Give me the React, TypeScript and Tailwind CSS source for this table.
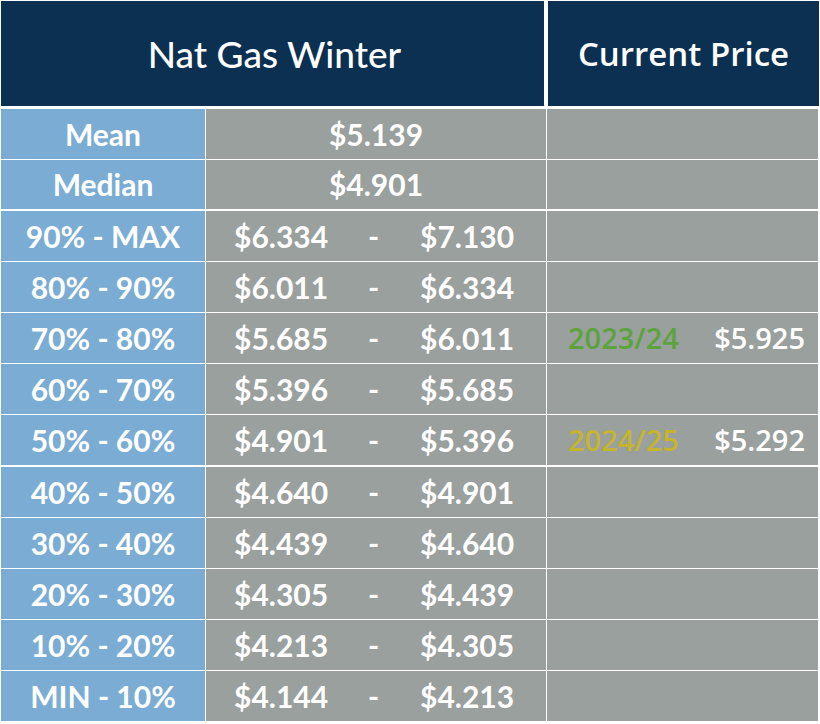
const rows = [
  { label: "90% - MAX", low: "$6.334", high: "$7.130" },
  { label: "80% - 90%", low: "$6.011", high: "$6.334" },
  { label: "70% - 80%", low: "$5.685", high: "$6.011", year: "2023/24", price: "$5.925", color: "text-[#5ba33a]" },
  { label: "60% - 70%", low: "$5.396", high: "$5.685" },
  { label: "50% - 60%", low: "$4.901", high: "$5.396", year: "2024/25", price: "$5.292", color: "text-[#c6b52c]" },
  { label: "40% - 50%", low: "$4.640", high: "$4.901" },
  { label: "30% - 40%", low: "$4.439", high: "$4.640" },
  { label: "20% - 30%", low: "$4.305", high: "$4.439" },
  { label: "10% - 20%", low: "$4.213", high: "$4.305" },
  { label: "MIN - 10%", low: "$4.144", high: "$4.213" },
];

const muli = "font-['Lato',sans-serif] font-bold";
const segoe = "font-['Open_Sans',sans-serif]";

export default function App() {
  return (
    <div className="flex h-[724px] w-[820px] flex-col overflow-hidden bg-white pl-px pt-px text-white">
      <div className="flex h-[105px] shrink-0 gap-[4px]">
        <div className="flex w-[543px] items-center justify-center bg-[#0b3052] pl-[4px] font-['Lato',sans-serif] text-[37px] font-medium">Nat Gas Winter</div>
        <div className={`${segoe} flex w-[271px] items-center justify-center bg-[#0b3052] text-[33px] font-semibold`}>Current Price</div>
      </div>

      <div className="mt-[3px] flex flex-col">
        {[{ label: "Mean", value: "$5.139" }, { label: "Median", value: "$4.901" }].map((row, i) => (
          <div key={row.label} className={`flex gap-px ${i === 0 ? "mb-px h-[50px]" : "mb-[2px] h-[49px]"}`}>
            <div className={`${muli} flex w-[204px] items-center justify-center bg-[#7aacd4] text-[30px]`}>{row.label}</div>
            <div className={`${muli} flex w-[340px] items-center justify-center bg-[#99a09e] text-[30px]`}>{row.value}</div>
            <div className="w-[271px] bg-[#99a09e]" />
          </div>
        ))}

        {rows.map((row, i) => (
          <div key={row.label} className={`flex h-[50px] shrink-0 gap-px ${i === 4 ? "mb-[2px]" : "mb-px"}`}>
            <div className={`${muli} flex w-[204px] items-center justify-center bg-[#7aacd4] text-[30px]`}>{row.label}</div>
            <div className={`${muli} flex w-[340px] items-center bg-[#99a09e] pl-[28px] text-[30px]`}>
              <span className="w-[134px]">{row.low}</span>
              <span className="w-[10px] text-center">-</span>
              <span className="ml-[42px]">{row.high}</span>
            </div>
            <div className={`${segoe} flex w-[271px] items-center justify-between bg-[#99a09e] pl-[21px] pr-[13px] text-[29px] font-semibold`}>
              {row.year && <span className={row.color}>{row.year}</span>}
              {row.price && <span>{row.price}</span>}
            </div>
          </div>
        ))}
      </div>
    </div>
  );
}
